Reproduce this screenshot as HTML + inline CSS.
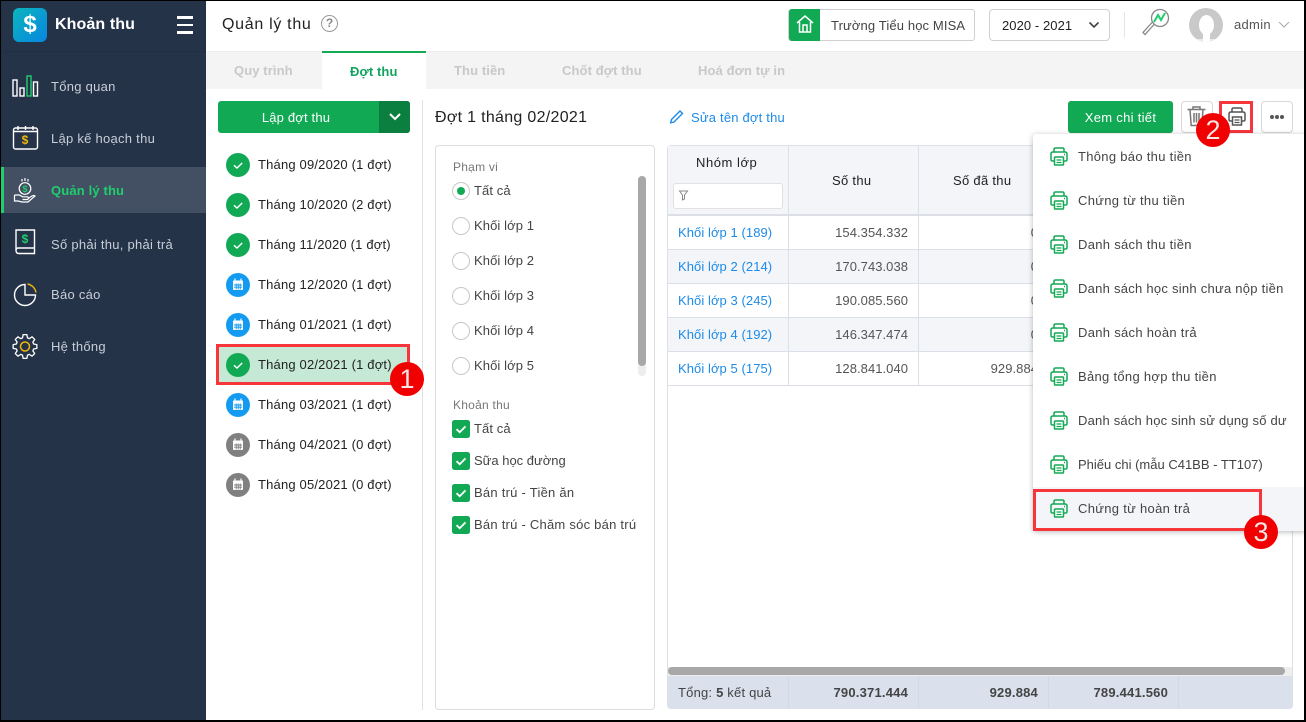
<!DOCTYPE html>
<html><head><meta charset="utf-8">
<style>
html,body{margin:0;padding:0;width:1306px;height:722px;overflow:hidden;background:#fff}
body{position:relative;font-family:"Liberation Sans",sans-serif;font-size:13px;color:#333}
.a{position:absolute}
.t{position:absolute;white-space:nowrap;line-height:18px;letter-spacing:.18px}
svg{position:absolute;overflow:visible}
.nav{color:#c8ced6;letter-spacing:.27px}
.m{color:#222}
.r{color:#555;text-align:right;letter-spacing:.05px}
.lnk{color:#1d8be8;letter-spacing:.07px}
.mi{color:#444;letter-spacing:.3px}
.f{color:#444}
.lb{color:#777;font-size:12px;letter-spacing:.25px}
.bdg{position:absolute;width:34px;height:34px;border-radius:50%;background:#f00000;color:#f4e4e4;font-size:27px;line-height:34px;text-align:center}
.hb{position:absolute;background:#dbdfe7}
.rd{position:absolute;left:452px;width:18px;height:18px;border:1px solid #c8c8c8;border-radius:50%;box-sizing:border-box}
</style></head><body>

<svg width="0" height="0" style="position:absolute">
<defs>
<g id="pr" fill="none" stroke="#12a955" stroke-width="1.500"><path d="M4 5V2.500q0-1.500 1.500-1.500h7q1.500 0 1.500 1.500V5"/><path d="M4 14H2.500Q1 14 1 12.500V7q0-2 2-2h12q2 0 2 2v5.500Q17 14 15.500 14H14"/><rect x="4.500" y="10" width="9" height="8" fill="#fff" rx=".8"/><path d="M6.500 13h5M6.500 15.500h5" stroke-width="1.200"/><path d="M14 7.500h1"/></g>
<g id="ck"><circle cx="12" cy="12" r="12" fill="#12a955"/><path d="M8 12.300l3 2.700 5.200-5" fill="none" stroke="#fff" stroke-width="1.500"/></g>
<g id="cal"><rect x="6.500" y="7" width="11" height="10.500" rx="1.200" fill="#fff"/><path d="M8 12h8M8 14.200h8M10.200 10.500v6M12.200 10.500v6M14.200 10.500v6" stroke-width=".9"/><path d="M9 5.500v2.500M15 5.500v2.500" stroke="#fff" stroke-width="1.200"/></g>
<g id="cb"><rect width="18" height="18" rx="2.500" fill="#12a955"/><path d="M4.500 9.200l3.200 3 5.800-5.800" fill="none" stroke="#fff" stroke-width="1.800"/></g>
</defs></svg>

<!-- Sidebar -->
<div class="a" style="left:0;top:0;width:206px;height:722px;background:#253349"></div>
<div class="a" style="left:1px;top:51px;width:205px;height:1px;background:#222f43"></div>
<div class="a" style="left:13px;top:8px;width:34px;height:34px;border-radius:6px;background:linear-gradient(135deg,#0db5bd,#0785e0)"></div>
<div class="t" style="left:13px;top:8px;width:34px;text-align:center;line-height:34px;color:#fff;font-size:24px;font-weight:bold;letter-spacing:0">$</div>
<div class="t" style="left:55px;top:16px;color:#fff;font-size:16px;font-weight:bold;letter-spacing:.1px">Khoản thu</div>
<div class="a" style="left:177px;top:16px;width:16px;height:2.500px;background:#fff"></div>
<div class="a" style="left:177px;top:23.500px;width:16px;height:2.500px;background:#fff"></div>
<div class="a" style="left:177px;top:31px;width:16px;height:2.500px;background:#fff"></div>

<svg style="left:0;top:0" width="206" height="370" fill="none" stroke="#fff" stroke-width="1.400">
<rect x="13" y="80" width="4" height="16"/><rect x="20" y="88" width="4" height="8"/><rect x="27" y="76" width="4" height="20" stroke="#1fce6d"/><rect x="33.500" y="82" width="4" height="14"/>
<rect x="13.500" y="128" width="24" height="21" rx="2"/><path d="M13.500 131.500h24"/><path d="M18 126v4M25.500 126v4M33 126v4"/>
<path d="M16 230h18.500v18H18q-2 0-2 2.500zM16 250.500q0 3 3 3h15.500v-5.500"/>
<path d="M25 284.500V295h10.500A10.500 10.500 0 1 1 25 284.500z"/><path d="M27.500 284A10.500 10.500 0 0 1 36 292.500" stroke="#f1b50e"/>
<polygon transform="translate(25 346.500)" stroke-linejoin="round" stroke-width="1.300" points="8.650,-2.480 11.850,-1.880 11.850,1.880 8.650,2.480 7.870,4.360 9.710,7.050 7.050,9.710 4.360,7.870 2.480,8.650 1.880,11.850 -1.880,11.850 -2.480,8.650 -4.360,7.870 -7.050,9.710 -9.710,7.050 -7.870,4.360 -8.650,2.480 -11.850,1.880 -11.850,-1.880 -8.650,-2.480 -7.870,-4.360 -9.710,-7.050 -7.050,-9.710 -4.360,-7.870 -2.480,-8.650 -1.880,-11.850 1.880,-11.850 2.480,-8.650 4.360,-7.870 7.050,-9.710 9.710,-7.050 7.870,-4.360"/>
<circle cx="25" cy="346.500" r="4.500" stroke="#f1b50e" stroke-width="1.500"/>
</svg>
<div class="t" style="left:13px;top:131px;width:24px;text-align:center;color:#f1b50e;font-size:12px;font-weight:bold;letter-spacing:0">$</div>
<div class="t" style="left:16px;top:230px;width:18px;text-align:center;color:#1fce6d;font-size:12px;font-weight:bold;letter-spacing:0">$</div>

<div class="t nav" style="left:51px;top:78px">Tổng quan</div>
<div class="t nav" style="left:51px;top:130px">Lập kế hoạch thu</div>
<div class="a" style="left:1px;top:167px;width:205px;height:46px;background:#435064"></div>
<div class="a" style="left:1px;top:167px;width:3px;height:46px;background:#1fce6d"></div>
<svg style="left:0;top:0" width="206" height="230" fill="none" stroke="#fff" stroke-width="1.200">
<circle cx="25" cy="188.500" r="5.800"/><path d="M25 178v3M22 179v2.500M28 179v2.500"/><path d="M14.500 195h5l3 1.800h5q2 1.200 0 2.700h-5M14.500 195v6h3.500l4 1h6l7-6q-1-1-3 0l-4 2.500"/>
</svg>
<div class="t" style="left:19px;top:179.500px;width:12px;text-align:center;color:#1fce6d;font-size:9px;font-weight:bold;letter-spacing:0">$</div>
<div class="t" style="left:51px;top:182px;color:#1fce6d;font-weight:bold;letter-spacing:.15px">Quản lý thu</div>
<div class="t nav" style="left:51px;top:236px">Số phải thu, phải trả</div>
<div class="t nav" style="left:51px;top:286px">Báo cáo</div>
<div class="t nav" style="left:51px;top:338px">Hệ thống</div>

<!-- Header -->
<div class="a" style="left:206px;top:0;width:1100px;height:51px;background:#fff;box-shadow:0 1px 3px rgba(0,0,0,.12)"></div>
<div class="t" style="left:222px;top:16px;color:#222;font-size:16px;letter-spacing:.7px">Quản lý thu</div>
<div class="a" style="left:321px;top:15px;width:15px;height:15px;border:1.500px solid #9a9a9a;border-radius:50%;color:#888;font-size:12px;line-height:15px;text-align:center;font-weight:bold">?</div>

<div class="a" style="left:788px;top:9px;width:185px;height:30px;border:1px solid #d0d0d0;border-radius:3px"></div>
<div class="a" style="left:789px;top:9px;width:31px;height:32px;background:#12a955;border-radius:3px 0 0 3px"></div>
<svg style="left:796px;top:14px" width="18" height="20" fill="none" stroke="#fff" stroke-width="1.500"><path d="M1 9l8-7 8 7M3.500 8v10h11V8M7 18v-7h4v7"/></svg>
<div class="t" style="left:831px;top:17px;color:#444;letter-spacing:.13px">Trường Tiểu học MISA</div>

<div class="a" style="left:989px;top:9px;width:119px;height:30px;border:1px solid #d0d0d0;border-radius:4px"></div>
<div class="t" style="left:1002px;top:17px;color:#222;letter-spacing:.07px">2020 - 2021</div>
<svg style="left:1088px;top:21px" width="12" height="8" fill="none" stroke="#444" stroke-width="1.600"><path d="M1.500 1.500l4.500 4.500 4.500-4.500"/></svg>
<div class="a" style="left:1124px;top:12px;width:1px;height:26px;background:#e2e5ec"></div>
<svg style="left:1140px;top:7px" width="32" height="30" fill="none"><circle cx="20" cy="11" r="8.500" stroke="#888" stroke-width="1.300"/><path d="M14.500 17L5 27.500l-2-2 9.500-10.500" stroke="#888" stroke-width="1.300"/><path d="M14 15l4-7 3 5 4-7" stroke="#1fce6d" stroke-width="2"/></svg>
<div class="a" style="left:1189px;top:8px;width:34px;height:34px;border-radius:50%;background:#c9c9c9;overflow:hidden"><div class="a" style="left:10px;top:7px;width:15px;height:20px;border-radius:50%;background:#fff"></div><div class="a" style="left:14px;top:24px;width:7px;height:12px;background:#fff"></div><div class="a" style="left:0;top:31px;width:34px;height:4px;background:rgba(255,255,255,.6)"></div></div>
<div class="t" style="left:1234px;top:16px;color:#555;letter-spacing:.3px">admin</div>
<svg style="left:1278px;top:21px" width="12" height="7" fill="none" stroke="#aaa" stroke-width="1.100"><path d="M1 1l5 5 5-5"/></svg>

<!-- Tabs -->
<div class="a" style="left:206px;top:52px;width:1100px;height:37px;background:#f4f4f4"></div>
<div class="a" style="left:322px;top:51px;width:104px;height:38px;background:#fff;border-top:2px solid #12a955;box-sizing:border-box"></div>
<div class="t" style="left:234px;top:62px;color:#c8c8c8;font-weight:bold;letter-spacing:.1px">Quy trình</div>
<div class="t" style="left:350px;top:63px;color:#12a360;font-weight:bold;letter-spacing:.1px">Đợt thu</div>
<div class="t" style="left:454px;top:62px;color:#c8c8c8;font-weight:bold;letter-spacing:.1px">Thu tiền</div>
<div class="t" style="left:562px;top:62px;color:#c8c8c8;font-weight:bold;letter-spacing:.1px">Chốt đợt thu</div>
<div class="t" style="left:698px;top:62px;color:#c8c8c8;font-weight:bold;letter-spacing:.1px">Hoá đơn tự in</div>

<!-- Left list -->
<div class="a" style="left:218px;top:101px;width:192px;height:32px;background:#12a955;border-radius:3px;overflow:hidden"><div class="a" style="left:161px;top:0;width:31px;height:32px;background:#0b7f40"></div></div>
<div class="t" style="left:218px;top:109px;width:156px;text-align:center;color:#fff">Lập đợt thu</div>
<svg style="left:389px;top:113px" width="12" height="8" fill="none" stroke="#fff" stroke-width="2"><path d="M1 1l5 5 5-5"/></svg>
<div class="a" style="left:422px;top:100px;width:1px;height:610px;background:#e0e0e0"></div>

<div class="a" style="left:216px;top:344px;width:194px;height:41px;background:#c5e9d4;border:3px solid #f7363c;box-sizing:border-box"></div>

<svg style="left:226px;top:153px" width="24" height="24"><use href="#ck"/></svg>
<svg style="left:226px;top:193px" width="24" height="24"><use href="#ck"/></svg>
<svg style="left:226px;top:233px" width="24" height="24"><use href="#ck"/></svg>
<svg style="left:226px;top:273px" width="24" height="24"><circle cx="12" cy="12" r="12" fill="#129bf0"/><g stroke="#129bf0"><use href="#cal"/></g></svg>
<svg style="left:226px;top:313px" width="24" height="24"><circle cx="12" cy="12" r="12" fill="#129bf0"/><g stroke="#129bf0"><use href="#cal"/></g></svg>
<svg style="left:226px;top:353px" width="24" height="24"><use href="#ck"/></svg>
<svg style="left:226px;top:393px" width="24" height="24"><circle cx="12" cy="12" r="12" fill="#129bf0"/><g stroke="#129bf0"><use href="#cal"/></g></svg>
<svg style="left:226px;top:433px" width="24" height="24"><circle cx="12" cy="12" r="12" fill="#808080"/><g stroke="#808080"><use href="#cal"/></g></svg>
<svg style="left:226px;top:473px" width="24" height="24"><circle cx="12" cy="12" r="12" fill="#808080"/><g stroke="#808080"><use href="#cal"/></g></svg>

<div class="t m" style="left:258px;top:156px">Tháng 09/2020 (1 đợt)</div>
<div class="t m" style="left:258px;top:196px">Tháng 10/2020 (2 đợt)</div>
<div class="t m" style="left:258px;top:236px">Tháng 11/2020 (1 đợt)</div>
<div class="t m" style="left:258px;top:276px">Tháng 12/2020 (1 đợt)</div>
<div class="t m" style="left:258px;top:316px">Tháng 01/2021 (1 đợt)</div>
<div class="t m" style="left:258px;top:356px">Tháng 02/2021 (1 đợt)</div>
<div class="t m" style="left:258px;top:396px">Tháng 03/2021 (1 đợt)</div>
<div class="t m" style="left:258px;top:436px">Tháng 04/2021 (0 đợt)</div>
<div class="t m" style="left:258px;top:476px">Tháng 05/2021 (0 đợt)</div>

<!-- Toolbar -->
<div class="t" style="left:435px;top:109px;color:#222;font-size:16px;letter-spacing:.3px">Đợt 1 tháng 02/2021</div>
<svg style="left:669px;top:108px" width="17" height="17" fill="none" stroke="#1d8be8" stroke-width="1.400"><path d="M2.500 11.500L11 3l2.500 2.500L5 14l-3.300.8z"/></svg>
<div class="t lnk" style="left:691px;top:109px;letter-spacing:.2px">Sửa tên đợt thu</div>
<div class="a" style="left:1068px;top:101px;width:105px;height:32px;background:#12a955;border-radius:3px;color:#fff;font-size:13px;line-height:33px;text-align:center;letter-spacing:.3px">Xem chi tiết</div>
<div class="a" style="left:1181px;top:101px;width:30px;height:30px;border:1px solid #d8d8d8;border-radius:4px"></div>
<svg style="left:1186px;top:105px" width="22" height="24" fill="none" stroke="#777" stroke-width="1.500"><path d="M1.500 4.500h18M7 4.500V2h7v2.500M4 4.500l1.200 16h10.600l1.200-16M8 8v9.500M10.500 8v9.500M13 8v9.500"/></svg>
<div class="a" style="left:1261px;top:101px;width:30px;height:30px;border:1px solid #d8d8d8;border-radius:4px"></div>
<div class="a" style="left:1270px;top:115px;width:4px;height:4px;border-radius:50%;background:#555"></div>
<div class="a" style="left:1275px;top:115px;width:4px;height:4px;border-radius:50%;background:#555"></div>
<div class="a" style="left:1280px;top:115px;width:4px;height:4px;border-radius:50%;background:#555"></div>
<svg style="left:1228px;top:107px" width="19" height="20" fill="none" stroke="#555" stroke-width="1.500"><path d="M4 5V2.500q0-1.500 1.500-1.500h7q1.500 0 1.500 1.500V5"/><path d="M4 14H2.500Q1 14 1 12.500V7q0-2 2-2h12q2 0 2 2v5.500Q17 14 15.500 14H14"/><rect x="4.500" y="10" width="9" height="8" fill="#fff"/><path d="M6.500 13h5M6.500 15.500h5" stroke-width="1.200"/></svg>
<div class="a" style="left:1219px;top:101px;width:34px;height:32px;border:3px solid #f7363c;box-sizing:border-box"></div>

<!-- Filter panel -->
<div class="a" style="left:435px;top:145px;width:220px;height:565px;border:1px solid #ddd;border-radius:4px;box-sizing:border-box"></div>
<div class="t lb" style="left:453px;top:158px">Phạm vi</div>
<div class="rd" style="top:182px"></div>
<div class="a" style="left:457px;top:187px;width:8px;height:8px;border-radius:50%;background:#12a955"></div>
<div class="t f" style="left:474px;top:182px;letter-spacing:.1px">Tất cả</div>
<div class="rd" style="top:217px"></div>
<div class="t f" style="left:474px;top:217px;letter-spacing:.1px">Khối lớp 1</div>
<div class="rd" style="top:252px"></div>
<div class="t f" style="left:474px;top:252px;letter-spacing:.1px">Khối lớp 2</div>
<div class="rd" style="top:287px"></div>
<div class="t f" style="left:474px;top:287px;letter-spacing:.1px">Khối lớp 3</div>
<div class="rd" style="top:322px"></div>
<div class="t f" style="left:474px;top:322px;letter-spacing:.1px">Khối lớp 4</div>
<div class="rd" style="top:357px"></div>
<div class="t f" style="left:474px;top:357px;letter-spacing:.1px">Khối lớp 5</div>
<div class="a" style="left:638px;top:176px;width:8px;height:200px;border-radius:4px;background:#ededed"></div>
<div class="a" style="left:638px;top:176px;width:8px;height:190px;border-radius:4px;background:#a8a8a8"></div>
<div class="t lb" style="left:453px;top:396px">Khoản thu</div>
<svg style="left:452px;top:420px" width="18" height="18"><use href="#cb"/></svg>
<svg style="left:452px;top:452px" width="18" height="18"><use href="#cb"/></svg>
<svg style="left:452px;top:484px" width="18" height="18"><use href="#cb"/></svg>
<svg style="left:452px;top:516px" width="18" height="18"><use href="#cb"/></svg>
<div class="t f" style="left:474px;top:420px;letter-spacing:.1px">Tất cả</div>
<div class="t f" style="left:474px;top:452px;letter-spacing:0">Sữa học đường</div>
<div class="t f" style="left:474px;top:484px;letter-spacing:.25px">Bán trú - Tiền ăn</div>
<div class="t f" style="left:474px;top:516px;letter-spacing:.24px">Bán trú - Chăm sóc bán trú</div>

<!-- Table -->
<div class="a" style="left:667px;top:145px;width:626px;height:564px;border:1px solid #dde0e6;border-radius:4px;box-sizing:border-box"></div>
<div class="a" style="left:668px;top:146px;width:624px;height:68px;background:#f3f5f9"></div>
<div class="a" style="left:668px;top:214px;width:624px;height:2px;background:#dcdfe6"></div>
<div class="a" style="left:668px;top:250px;width:624px;height:33px;background:#f3f5f9"></div>
<div class="a" style="left:668px;top:318px;width:624px;height:33px;background:#f3f5f9"></div>
<div class="hb" style="left:668px;top:249px;width:624px;height:1px"></div>
<div class="hb" style="left:668px;top:283px;width:624px;height:1px"></div>
<div class="hb" style="left:668px;top:317px;width:624px;height:1px"></div>
<div class="hb" style="left:668px;top:351px;width:624px;height:1px"></div>
<div class="hb" style="left:668px;top:385px;width:624px;height:1px"></div>
<div class="hb" style="left:788px;top:146px;width:1px;height:240px"></div>
<div class="hb" style="left:918px;top:146px;width:1px;height:240px"></div>
<div class="hb" style="left:1048px;top:146px;width:1px;height:240px"></div>

<div class="t" style="left:696px;top:154px;color:#222;letter-spacing:.55px">Nhóm lớp</div>
<div class="a" style="left:673px;top:183px;width:110px;height:26px;background:#fff;border:1px solid #e2e2e2;border-radius:3px;box-sizing:border-box"></div>
<svg style="left:679px;top:190px" width="10" height="11" fill="none" stroke="#888"><path d="M.5 1h8L5.500 5v4l-2 1V5z"/></svg>
<div class="t" style="left:832px;top:172px;color:#222;letter-spacing:.3px">Số thu</div>
<div class="t" style="left:953px;top:172px;color:#222;letter-spacing:.3px">Số đã thu</div>

<div class="t lnk" style="left:678px;top:224px">Khối lớp 1 (189)</div>
<div class="t lnk" style="left:678px;top:258px">Khối lớp 2 (214)</div>
<div class="t lnk" style="left:678px;top:292px">Khối lớp 3 (245)</div>
<div class="t lnk" style="left:678px;top:326px">Khối lớp 4 (192)</div>
<div class="t lnk" style="left:678px;top:360px">Khối lớp 5 (175)</div>
<div class="t r" style="left:808px;width:100px;top:224px">154.354.332</div>
<div class="t r" style="left:808px;width:100px;top:258px">170.743.038</div>
<div class="t r" style="left:808px;width:100px;top:292px">190.085.560</div>
<div class="t r" style="left:808px;width:100px;top:326px">146.347.474</div>
<div class="t r" style="left:808px;width:100px;top:360px">128.841.040</div>
<div class="t r" style="left:938px;width:100px;top:224px">0</div>
<div class="t r" style="left:938px;width:100px;top:258px">0</div>
<div class="t r" style="left:938px;width:100px;top:292px">0</div>
<div class="t r" style="left:938px;width:100px;top:326px">0</div>
<div class="t r" style="left:938px;width:100px;top:360px">929.884</div>

<div class="a" style="left:668px;top:667px;width:624px;height:9px;background:#eee"></div>
<div class="a" style="left:668px;top:667px;width:617px;height:8px;border-radius:4px;background:#a8a8a8"></div>
<div class="a" style="left:668px;top:676px;width:625px;height:33px;background:#dae0ec;border-radius:0 0 4px 4px"></div>
<div class="a" style="left:788px;top:676px;width:1px;height:33px;background:#d2d8e4"></div>
<div class="a" style="left:918px;top:676px;width:1px;height:33px;background:#d2d8e4"></div>
<div class="a" style="left:1048px;top:676px;width:1px;height:33px;background:#d2d8e4"></div>
<div class="a" style="left:1178px;top:676px;width:1px;height:33px;background:#d2d8e4"></div>
<div class="t" style="left:678px;top:684px;color:#444;letter-spacing:.2px">Tổng: <b>5</b> kết quả</div>
<div class="t" style="left:808px;width:100px;top:684px;text-align:right;color:#444;font-weight:bold;letter-spacing:.2px">790.371.444</div>
<div class="t" style="left:938px;width:100px;top:684px;text-align:right;color:#444;font-weight:bold;letter-spacing:.2px">929.884</div>
<div class="t" style="left:1068px;width:100px;top:684px;text-align:right;color:#444;font-weight:bold;letter-spacing:.2px">789.441.560</div>

<!-- Dropdown -->
<div class="a" style="left:1033px;top:134px;width:273px;height:397px;background:#fff;border-radius:3px 0 0 3px;box-shadow:0 1px 6px rgba(0,0,0,.28)"></div>
<div class="a" style="left:1033px;top:487px;width:273px;height:44px;background:#f3f5f9"></div>
<svg style="left:1050px;top:147px" width="18" height="19"><use href="#pr"/></svg>
<svg style="left:1050px;top:191px" width="18" height="19"><use href="#pr"/></svg>
<svg style="left:1050px;top:235px" width="18" height="19"><use href="#pr"/></svg>
<svg style="left:1050px;top:279px" width="18" height="19"><use href="#pr"/></svg>
<svg style="left:1050px;top:323px" width="18" height="19"><use href="#pr"/></svg>
<svg style="left:1050px;top:367px" width="18" height="19"><use href="#pr"/></svg>
<svg style="left:1050px;top:411px" width="18" height="19"><use href="#pr"/></svg>
<svg style="left:1050px;top:455px" width="18" height="19"><use href="#pr"/></svg>
<svg style="left:1050px;top:499px" width="18" height="19"><use href="#pr"/></svg>
<div class="t mi" style="left:1078px;top:148px">Thông báo thu tiền</div>
<div class="t mi" style="left:1078px;top:192px">Chứng từ thu tiền</div>
<div class="t mi" style="left:1078px;top:236px">Danh sách thu tiền</div>
<div class="t mi" style="left:1078px;top:280px;letter-spacing:.26px">Danh sách học sinh chưa nộp tiền</div>
<div class="t mi" style="left:1078px;top:324px">Danh sách hoàn trả</div>
<div class="t mi" style="left:1078px;top:368px">Bảng tổng hợp thu tiền</div>
<div class="t mi" style="left:1078px;top:412px;letter-spacing:.2px">Danh sách học sinh sử dụng số dư</div>
<div class="t mi" style="left:1078px;top:456px;letter-spacing:0">Phiếu chi (mẫu C41BB - TT107)</div>
<div class="t mi" style="left:1078px;top:500px">Chứng từ hoàn trả</div>
<div class="a" style="left:1033px;top:489px;width:229px;height:42px;border:3px solid #f7363c;box-sizing:border-box"></div>

<!-- Badges -->
<div class="bdg" style="left:390px;top:362px">1</div>
<div class="bdg" style="left:1196px;top:113px">2</div>
<div class="bdg" style="left:1244px;top:515px">3</div>

<!-- Outer frame -->
<div class="a" style="left:0;top:0;width:1306px;height:722px;border:1px solid #000;border-width:1px 2px 2px 1px;box-sizing:border-box"></div>
</body></html>
